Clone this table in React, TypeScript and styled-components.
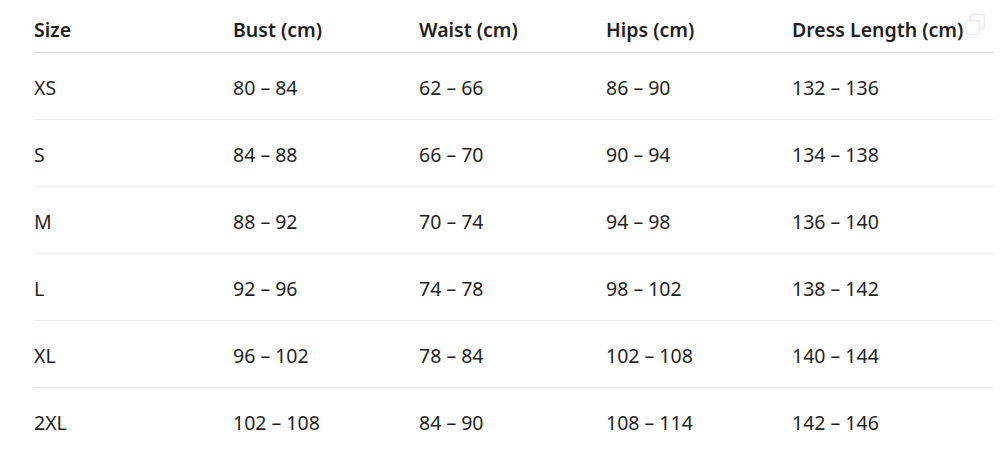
import React from 'react';
import styled, { createGlobalStyle } from 'styled-components';

const GlobalStyle = createGlobalStyle`
  body {
    margin: 0;
    background: #ffffff;
    font-family: 'Noto Sans', 'Open Sans', sans-serif;
    color: #1f1f1f;
  }
`;

const Wrapper = styled.div`
  position: relative;
  padding-left: 34px;
  width: 960px;
`;

const Table = styled.table`
  width: 960px;
  border-collapse: collapse;
  table-layout: fixed;
  font-size: 19.5px;
`;

const HeadCell = styled.th`
  text-align: left;
  font-weight: 600;
  height: 52px;
  padding: 8px 0 0;
  vertical-align: middle;
  border-bottom: 1px solid #dcdcdc;
  box-sizing: border-box;
  white-space: nowrap;
`;

const Row = styled.tr<{ $last?: boolean }>`
  border-bottom: ${(p) => (p.$last ? 'none' : '1px solid #efefef')};
`;

const Cell = styled.td`
  height: 67px;
  padding: 3px 0 0;
  box-sizing: border-box;
  vertical-align: middle;
  font-weight: 400;
`;

const CopyButton = styled.div`
  position: absolute;
  top: 13px;
  right: 8px;
  width: 22px;
  height: 24px;
  color: #ececec;
`;

const widths = [199, 186, 187, 186, 202];
const headers = ['Size', 'Bust (cm)', 'Waist (cm)', 'Hips (cm)', 'Dress Length (cm)'];
const rows = [
  ['XS', '80 – 84', '62 – 66', '86 – 90', '132 – 136'],
  ['S', '84 – 88', '66 – 70', '90 – 94', '134 – 138'],
  ['M', '88 – 92', '70 – 74', '94 – 98', '136 – 140'],
  ['L', '92 – 96', '74 – 78', '98 – 102', '138 – 142'],
  ['XL', '96 – 102', '78 – 84', '102 – 108', '140 – 144'],
  ['2XL', '102 – 108', '84 – 90', '108 – 114', '142 – 146'],
];

const App = (): JSX.Element => (
  <>
    <GlobalStyle />
    <Wrapper>
      <CopyButton>
        <svg width="22" height="24" viewBox="0 0 22 24" fill="none" stroke="currentColor" strokeWidth="1.5">
          <rect x="6.5" y="1.5" width="14" height="14" rx="3" />
          <rect x="1.5" y="7.5" width="14" height="14" rx="3" fill="#fff" />
        </svg>
      </CopyButton>
      <Table>
        <colgroup>
          {widths.map((w, i) => (
            <col key={i} style={{ width: w }} />
          ))}
        </colgroup>
        <thead>
          <tr>
            {headers.map((h) => (
              <HeadCell key={h}>{h}</HeadCell>
            ))}
          </tr>
        </thead>
        <tbody>
          {rows.map((r, i) => (
            <Row key={r[0]} $last={i === rows.length - 1}>
              {r.map((c, j) => (
                <Cell key={j}>{c}</Cell>
              ))}
            </Row>
          ))}
        </tbody>
      </Table>
    </Wrapper>
  </>
);

export default App;
